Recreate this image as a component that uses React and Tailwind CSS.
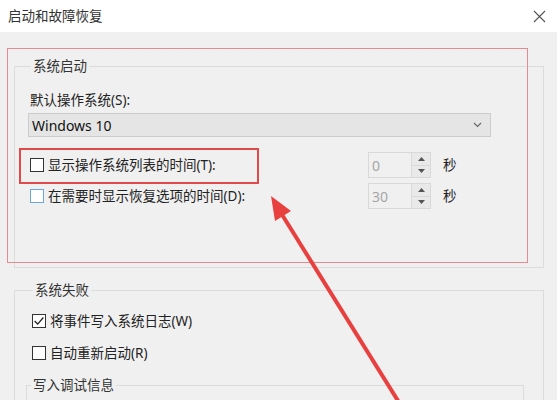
import React from "react";

const font = { fontFamily: '"Noto Sans", "Noto Sans CJK SC", sans-serif' };

// --- small controls ---
const CheckBox = ({ checked, accent }) => (
    <span
        className={`w-[14px] h-[14px] shrink-0 bg-white border flex items-center justify-center ${accent ? "border-[#6aa7e0]" : "border-[#333333]"}`}
    >
        {checked && (
            <svg width="12" height="12" viewBox="0 0 11 11">
                <path d="M1.5 5.5 L4.3 8.3 L9.5 2.3" fill="none" stroke="#222" strokeWidth="1.2" />
            </svg>
        )}
    </span>
);

const SpinBox = ({ value }) => (
    <div className="flex w-[63px] h-[26px] border border-[#d9d9d9] bg-[#f0f0f0]">
        <div className="flex-1 flex items-center pl-[3px] text-[14px] text-[#a6a6a6]">{value}</div>
        <div className="w-[19px] flex flex-col border-l border-[#d9d9d9] bg-[#e9e9e9]">
            <div className="flex-1 flex items-center justify-center border-b border-[#d9d9d9]">
                <svg width="7" height="4" viewBox="0 0 7 4"><path d="M0 4 L3.5 0 L7 4 Z" fill="#555" /></svg>
            </div>
            <div className="flex-1 flex items-center justify-center">
                <svg width="7" height="4" viewBox="0 0 7 4"><path d="M0 0 L3.5 4 L7 0 Z" fill="#555" /></svg>
            </div>
        </div>
    </div>
);

const TimeRow = ({ label, value, accent }) => (
    <div className="flex items-center h-[26px]">
        <div className="w-[340px] flex items-center gap-[4px] pl-[2px]">
            <CheckBox accent={accent} />
            <span className="text-[13.5px] text-[#222]">{label}</span>
        </div>
        <SpinBox value={value} />
        <span className="ml-[12px] text-[13.5px] text-[#222]">秒</span>
    </div>
);

const CheckRow = ({ label, checked }) => (
    <div className="flex items-center h-[20px] gap-[4px] pl-[2px]">
        <CheckBox checked={checked} />
        <span className="text-[13.5px] text-[#222]">{label}</span>
    </div>
);

export default function App() {
    return (
        <div className="relative w-[557px] h-[400px] overflow-hidden bg-[#f0f0f0]" style={font}>
            {/* title bar */}
            <div className="h-[32px] bg-white flex items-center justify-between pl-[8px] pr-[11px]">
                <span className="text-[13.5px] text-[#333]">启动和故障恢复</span>
                <svg width="13" height="13" viewBox="0 0 13 13">
                    <path d="M1 1 L12 12 M12 1 L1 12" stroke="#555" strokeWidth="1.1" />
                </svg>
            </div>

            <div className="pl-[14px] w-[544px]">
                {/* 系统启动 */}
                <fieldset className="mt-[24px] border border-[#dcdcdc] pl-[13px] pb-[58px]">
                    <legend className="ml-[3px] px-[2px] text-[13.5px] leading-[20px] text-[#333]">系统启动</legend>
                    <div className="mt-[14px] ml-[2px] text-[13.5px] leading-[20px] text-[#222]">默认操作系统(S):</div>
                    <div className="mt-[3px] w-[463px] h-[24px] bg-[#e5e5e5] border border-[#cccccc] flex items-center justify-between pl-[3px] pr-[8px]">
                        <span className="text-[14px] text-[#111]">Windows 10</span>
                        <svg width="9" height="6" viewBox="0 0 9 6">
                            <path d="M1 1 L4.5 4.5 L8 1" fill="none" stroke="#666" strokeWidth="1.1" />
                        </svg>
                    </div>
                    <div className="mt-[15px] flex flex-col gap-[5px]">
                        <TimeRow label="显示操作系统列表的时间(T):" value="0" />
                        <TimeRow label="在需要时显示恢复选项的时间(D):" value="30" accent />
                    </div>
                </fieldset>

                {/* 系统失败 */}
                <fieldset className="mt-[12px] border border-[#dcdcdc] pl-[15px] pr-[19px] pb-[20px]">
                    <legend className="ml-[3px] px-[2px] text-[13.5px] leading-[20px] text-[#333]">系统失败</legend>
                    <div className="mt-[11px] flex flex-col gap-[12px]">
                        <CheckRow label="将事件写入系统日志(W)" checked />
                        <CheckRow label="自动重新启动(R)" />
                    </div>
                    <fieldset className="mt-[12px] border border-[#dcdcdc] h-[60px] -ml-[4px]">
                        <legend className="ml-[4px] px-[2px] text-[13.5px] leading-[20px] text-[#333]">写入调试信息</legend>
                    </fieldset>
                </fieldset>
            </div>

            {/* annotations */}
            <div className="absolute left-[7px] top-[48px] w-[521px] h-[215px] border-[1.5px] border-[#e58a8f]" />
            <div className="absolute left-[19px] top-[148px] w-[240px] h-[36px] border-2 border-[#e04a4a]" />
            <svg className="absolute inset-0 pointer-events-none" width="557" height="400" viewBox="0 0 557 400">
                <line x1="400" y1="404" x2="281" y2="213" stroke="#e8403f" strokeWidth="4" />
                <polygon points="271,196 275,221 291,211" fill="#e8403f" />
            </svg>
        </div>
    );
}
